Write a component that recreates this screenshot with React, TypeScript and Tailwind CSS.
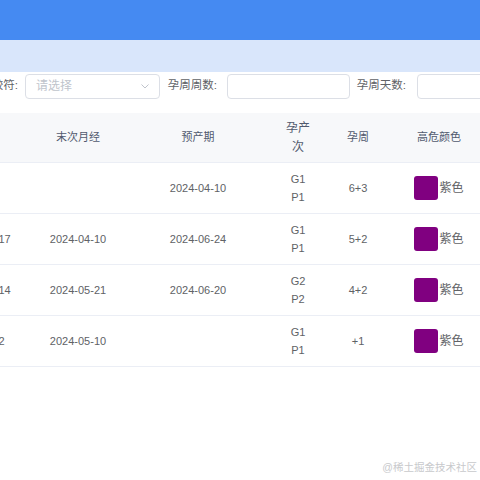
import React from "react";

type Row = {
  start: string;
  lmp: string;
  edd: string;
  g: string;
  p: string;
  week: string;
  color: string;
  colorName: string;
};

const rows: Row[] = [
  { start: "", lmp: "", edd: "2024-04-10", g: "G1", p: "P1", week: "6+3", color: "#800080", colorName: "紫色" },
  { start: "2024-03-17", lmp: "2024-04-10", edd: "2024-06-24", g: "G1", p: "P1", week: "5+2", color: "#800080", colorName: "紫色" },
  { start: "2024-03-14", lmp: "2024-05-21", edd: "2024-06-20", g: "G2", p: "P2", week: "4+2", color: "#800080", colorName: "紫色" },
  { start: "2024-3-2", lmp: "2024-05-10", edd: "", g: "G1", p: "P1", week: "+1", color: "#800080", colorName: "紫色" },
];

// column widths: first column is scrolled partly out of view
const cols = "grid grid-cols-[101px_90px_150px_50px_70px_92px]";

function Chevron() {
  return (
    <svg width="10" height="10" viewBox="0 0 10 10" fill="none">
      <polyline points="1.5,3.5 5,7 8.5,3.5" stroke="#c0c4cc" strokeWidth="1" />
    </svg>
  );
}

export default function App() {
  return (
    <div className="relative w-[480px] h-[480px] overflow-hidden bg-white font-['Liberation_Sans','Noto_Sans_CJK_SC',sans-serif] text-[11px]">
      {/* Top bar */}
      <div className="h-[40px] bg-[#458af2]" />
      {/* Tabs strip */}
      <div className="h-[32px] bg-[#d9e6fb]" />

      {/* Filter row */}
      <div className="flex items-center h-[26px] mt-[1px] -ml-[45px] text-[11.5px] text-[#606266]">
        <div className="w-[70px] shrink-0 pr-[7px] text-right whitespace-nowrap">孕周比较符:</div>
        <div className="w-[135px] h-[25px] shrink-0 flex items-center justify-between pl-[10px] pr-[9px] border border-[#dcdfe6] rounded-[4px] bg-white">
          <span className="text-[12px] text-[#c0c4cc]">请选择</span>
          <Chevron />
        </div>
        <div className="w-[67px] shrink-0 pr-[10px] text-right whitespace-nowrap">孕周周数:</div>
        <div className="w-[123px] h-[25px] shrink-0 border border-[#dcdfe6] rounded-[4px] bg-white" />
        <div className="w-[67px] shrink-0 pr-[11px] text-right whitespace-nowrap">孕周天数:</div>
        <div className="w-[123px] h-[25px] shrink-0 border border-[#dcdfe6] rounded-[4px] bg-white" />
      </div>

      {/* Table */}
      <div className="mt-[14px] overflow-hidden">
        <div className="-ml-[68px] w-[553px]">
          <div className={`${cols} h-[50px] bg-[#f7f8fa] text-[#515a6e] items-center text-center border-b border-[#ebeef5]`}>
            <div>日期</div>
            <div>末次月经</div>
            <div>预产期</div>
            <div className="w-[30px] mx-auto leading-[19px] text-[12px]">孕产次</div>
            <div>孕周</div>
            <div>高危颜色</div>
          </div>
          {rows.map((r, i) => (
            <div
              key={i}
              className={`${cols} h-[51px] items-center text-center text-[#606266] border-b border-[#ebeef5]`}
            >
              <div>{r.start}</div>
              <div>{r.lmp}</div>
              <div>{r.edd}</div>
              <div className="flex flex-col leading-[18px]">
                <span>{r.g}</span>
                <span>{r.p}</span>
              </div>
              <div>{r.week}</div>
              <div className="flex items-center justify-center">
                <span
                  className="w-[24px] h-[24px] rounded-[3px]"
                  style={{ backgroundColor: r.color }}
                />
                <span className="ml-[1px] text-[12px]">{r.colorName}</span>
              </div>
            </div>
          ))}
        </div>
      </div>

      {/* Watermark */}
      <div className="absolute right-[3px] bottom-[4px] text-[10.5px] text-[#c8c9cc] whitespace-nowrap">
        @稀土掘金技术社区
      </div>
    </div>
  );
}
